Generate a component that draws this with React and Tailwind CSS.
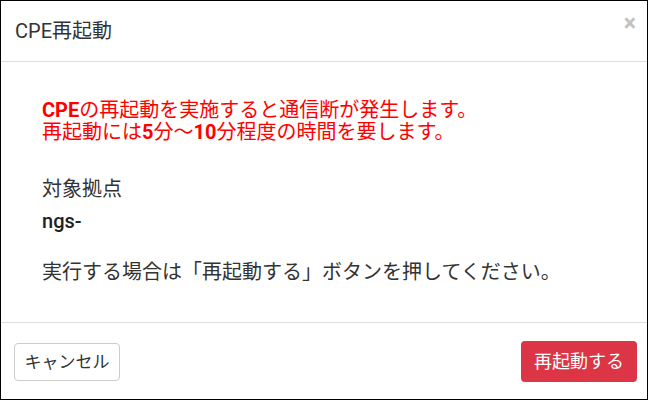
export default function App() {
  const font = "font-['Roboto','Noto_Sans_CJK_JP',sans-serif]";
  return (
    <div className={`w-[649px] h-[401px] bg-white ${font}`}>
      <div className="w-[648px] h-[400px] border border-black bg-white flex flex-col">
        <div className="h-[61px] border-b border-[#dedede] flex justify-between pl-[14px] pr-[11px]">
          <h5 className="text-[20px] leading-[24px] text-[#333] mt-[18px]">CPE再起動</h5>
          <span className="text-[#c2c2c2] text-[23px] leading-[23px] font-bold mt-[11px]">×</span>
        </div>
        <div className="h-[260px] pl-[41px] pt-[37px] text-[20px] leading-[22px] text-[#333]">
          <div className="text-[#ff0000]">
            <p><b className="font-bold">CPE</b>の再起動を実施すると通信断が発生します。</p>
            <p>再起動には<b className="font-bold">5</b>分～<b className="font-bold">10</b>分程度の時間を要します。</p>
          </div>
          <p className="mt-[35px]">対象拠点</p>
          <p className="mt-[10px] font-medium text-[#222]">ngs-</p>
          <p className="mt-[29px]">実行する場合は「再起動する」ボタンを押してください。</p>
        </div>
        <div className="h-[77px] border-t border-[#dedede] flex items-center justify-between pl-[13px] pr-[10px] pt-[1px]">
          <button className="w-[106px] h-[38px] border border-[#cccccc] rounded-[4px] bg-white text-[#333] text-[17px] leading-[20px]">キャンセル</button>
          <button className="w-[116px] h-[41px] rounded-[4px] bg-[#dc3545] text-white text-[18px] leading-[22px]">再起動する</button>
        </div>
      </div>
    </div>
  );
}
